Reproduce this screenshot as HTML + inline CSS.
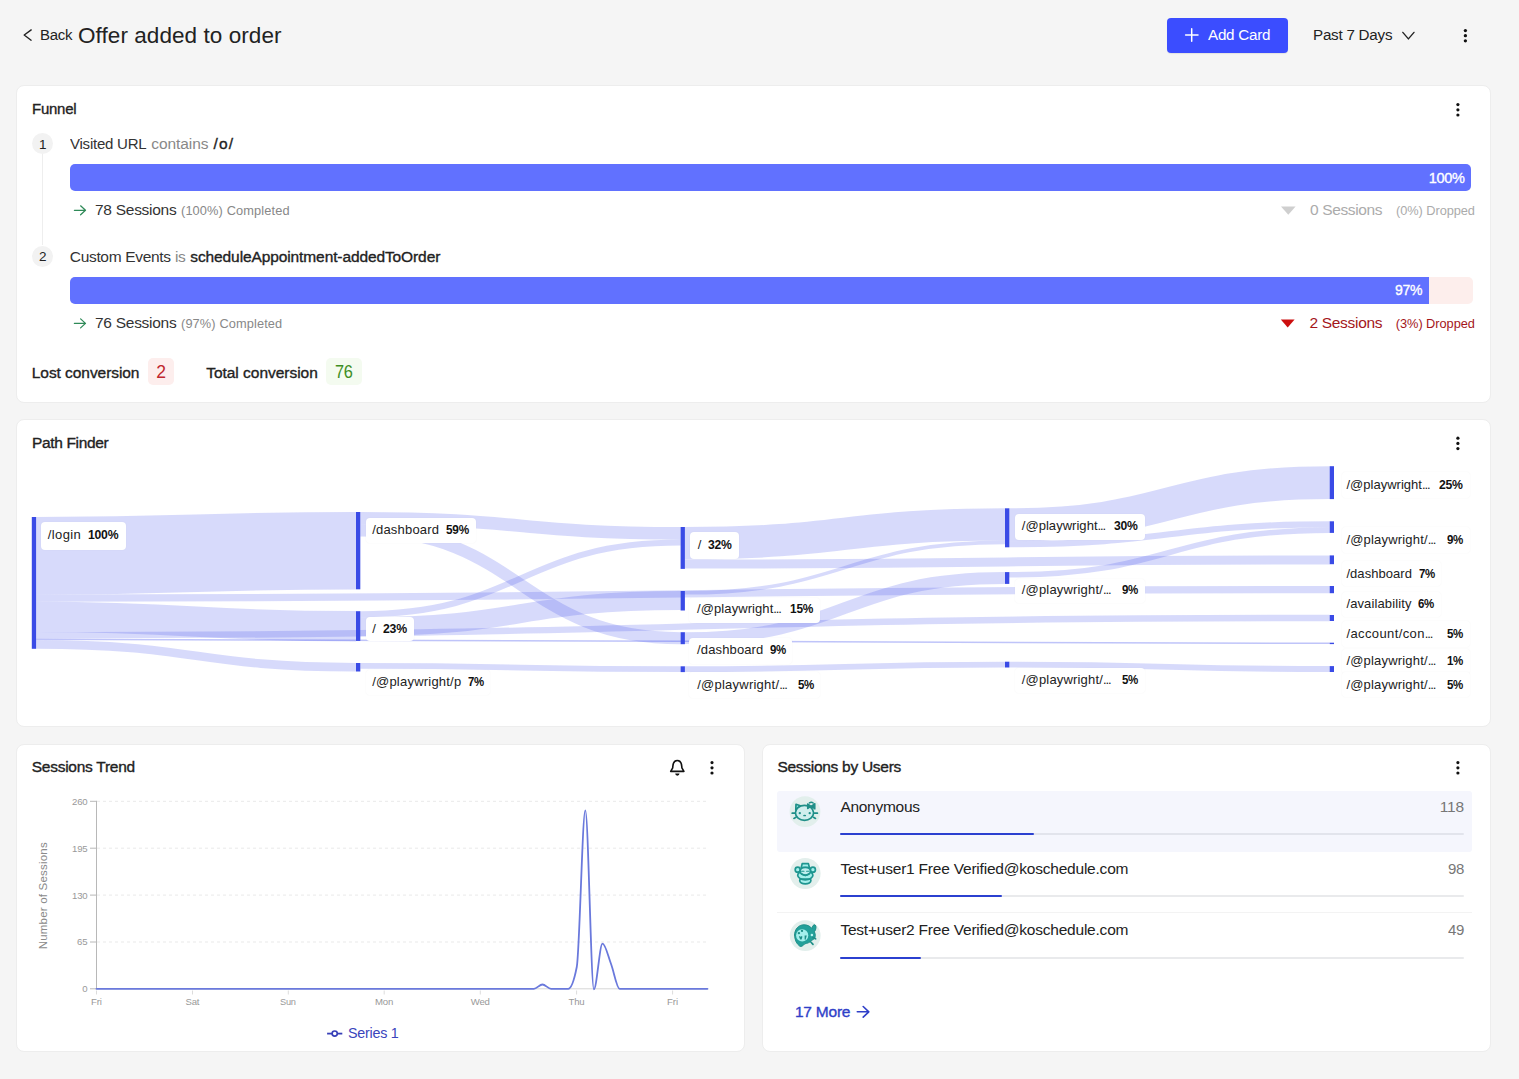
<!DOCTYPE html>
<html lang="en">
<head>
<meta charset="utf-8">
<title>Offer added to order</title>
<style>
*{box-sizing:border-box;margin:0;padding:0}
html,body{width:1519px;height:1079px;overflow:hidden;background:#f5f5f5}
body{font-family:"Liberation Sans",sans-serif;position:relative;color:#222}
.t{position:absolute;white-space:pre;line-height:1;z-index:4}
.card{position:absolute;background:#fff;border:1px solid #ededed;border-radius:8px;z-index:1}
.abs{position:absolute}
.lb{position:absolute;background:#fff;border-radius:4px;z-index:3;box-shadow:0 0 2px rgba(0,0,0,.045)}
.ico{position:absolute;left:0;top:0;z-index:6}
</style>
</head>
<body>

<!-- cards -->
<div class="card" style="left:15.5px;top:84.5px;width:1475px;height:318px"></div>
<div class="card" style="left:15.5px;top:418.5px;width:1475px;height:308px"></div>
<div class="card" style="left:15.5px;top:743.5px;width:729px;height:308px"></div>
<div class="card" style="left:761.5px;top:743.5px;width:729px;height:308px"></div>

<!-- add card button -->
<div class="abs" style="left:1167px;top:18.3px;width:121px;height:34.4px;background:#3b4dff;border-radius:4px;z-index:1;box-shadow:0 1px 1px rgba(0,0,0,.08)"></div>

<!-- funnel -->
<div class="abs" style="left:42.1px;top:154px;width:1.4px;height:91px;background:#eeeeee;z-index:2"></div>
<div class="abs" style="left:32.2px;top:133.1px;width:21.2px;height:21.2px;border-radius:50%;background:#f2f2f2;z-index:2"></div>
<div class="abs" style="left:32.2px;top:245.7px;width:21.2px;height:21.2px;border-radius:50%;background:#f2f2f2;z-index:2"></div>
<div class="abs" style="left:69.5px;top:164px;width:1401.8px;height:26.8px;border-radius:5px;background:#6171ff;z-index:2"></div>
<div class="abs" style="left:69.5px;top:276.8px;width:1403px;height:26.8px;border-radius:5px;background:#fdeeec;z-index:2;overflow:hidden"><div style="width:1359.3px;height:100%;background:#6171ff"></div></div>
<div class="abs" style="left:148px;top:358px;width:26.4px;height:27.4px;border-radius:5px;background:#fdeeed;z-index:2"></div>
<div class="abs" style="left:326.4px;top:358px;width:35.6px;height:27.4px;border-radius:5px;background:#f4fbf0;z-index:2"></div>

<!-- users rows -->
<div class="abs" style="left:776.5px;top:790.6px;width:695.8px;height:61.2px;background:#f5f6fd;border-radius:3px;z-index:2"></div>
<div class="abs" style="left:776.5px;top:912.2px;width:695.8px;height:1.2px;background:#f3f3f3;z-index:2"></div>
<div class="abs" style="left:840.3px;top:833.2px;width:623.8px;height:2.2px;background:#e2e4ec;z-index:3;border-radius:1px"></div>
<div class="abs" style="left:840.3px;top:833.2px;width:193.6px;height:2.2px;background:#2b40d0;z-index:3;border-radius:1px"></div>
<div class="abs" style="left:840.3px;top:895.2px;width:623.4px;height:2.2px;background:#e9eaec;z-index:3;border-radius:1px"></div>
<div class="abs" style="left:840.3px;top:895.2px;width:161.8px;height:2.2px;background:#2b40d0;z-index:3;border-radius:1px"></div>
<div class="abs" style="left:840.3px;top:957.1px;width:623.4px;height:2.2px;background:#e9eaec;z-index:3;border-radius:1px"></div>
<div class="abs" style="left:840.3px;top:957.1px;width:80.8px;height:2.2px;background:#2b40d0;z-index:3;border-radius:1px"></div>

<div class="lb" style="left:40.8px;top:522.2px;width:85.2px;height:27.5px"></div>
<div class="lb" style="left:365.8px;top:517.6px;width:110.2px;height:25.4px"></div>
<div class="lb" style="left:365.8px;top:616.8px;width:48.2px;height:24.7px"></div>
<div class="lb" style="left:365.8px;top:669.5px;width:124.2px;height:25.0px"></div>
<div class="lb" style="left:690px;top:532.2px;width:48.6px;height:26.6px"></div>
<div class="lb" style="left:688.7px;top:597.5px;width:131.8px;height:25.4px"></div>
<div class="lb" style="left:688.7px;top:638px;width:103.6px;height:26.0px"></div>
<div class="lb" style="left:688.7px;top:672px;width:131.8px;height:25.5px"></div>
<div class="lb" style="left:1014.9px;top:513.9px;width:129.8px;height:26.1px"></div>
<div class="lb" style="left:1014.9px;top:578.5px;width:129.8px;height:24.5px"></div>
<div class="lb" style="left:1014.9px;top:667.7px;width:129.8px;height:25.3px"></div>
<div class="lb" style="left:1342.4px;top:472px;width:127.6px;height:25.5px"></div>
<div class="lb" style="left:1342.4px;top:527.3px;width:127.6px;height:25.5px"></div>
<div class="lb" style="left:1342.4px;top:561px;width:99.1px;height:25.3px"></div>
<div class="lb" style="left:1342.4px;top:591.7px;width:99.1px;height:25.3px"></div>
<div class="lb" style="left:1342.4px;top:621.2px;width:127.6px;height:25.4px"></div>
<div class="lb" style="left:1342.4px;top:648.6px;width:127.6px;height:25.3px"></div>
<div class="lb" style="left:1342.4px;top:672.2px;width:127.6px;height:25.2px"></div>

<svg width="1519" height="1079" viewBox="0 0 1519 1079" style="position:absolute;left:0;top:0;z-index:2">
<g fill="none" stroke="#3946eb" stroke-opacity="0.2">
<path d="M36.1,555.70C196.1,555.70 196.1,550.70 356.0,550.70" stroke-width="77.4"/>
<path d="M36.1,598.05C682.9,598.05 682.9,589.65 1329.7,589.65" stroke-width="7.3"/>
<path d="M36.1,616.85C196.1,616.85 196.1,626.25 356.0,626.25" stroke-width="30.3"/>
<path d="M36.1,635.20C682.9,635.20 682.9,618.00 1329.7,618.00" stroke-width="6.4"/>
<path d="M36.1,639.35C682.9,639.35 682.9,643.35 1329.7,643.35" stroke-width="1.5" stroke-opacity="0.32"/>
<path d="M36.1,644.40C196.1,644.40 196.1,667.20 356.0,667.20" stroke-width="8.6"/>
<path d="M360.3,518.30C520.5,518.30 520.5,533.30 680.6,533.30" stroke-width="12.6"/>
<path d="M360.3,530.60C520.5,530.60 520.5,638.20 680.6,638.20" stroke-width="12.0"/>
<path d="M360.3,614.20C520.5,614.20 520.5,542.60 680.6,542.60" stroke-width="6.0"/>
<path d="M360.3,626.70C520.5,626.70 520.5,600.50 680.6,600.50" stroke-width="19.0"/>
<path d="M360.3,665.90C520.5,665.90 520.5,669.20 680.6,669.20" stroke-width="5.8"/>
<path d="M684.8,543.15C844.9,543.15 844.9,524.45 1005.0,524.45" stroke-width="32.3"/>
<path d="M684.8,564.00C1007.2,564.00 1007.2,559.90 1329.7,559.90" stroke-width="9.0"/>
<path d="M684.8,592.80C844.9,592.80 844.9,542.40 1005.0,542.40" stroke-width="3.6"/>
<path d="M684.8,638.10C844.9,638.10 844.9,578.00 1005.0,578.00" stroke-width="11.8"/>
<path d="M684.8,669.20C844.9,669.20 844.9,664.60 1005.0,664.60" stroke-width="5.8"/>
<path d="M1009.1,524.75C1169.4,524.75 1169.4,482.65 1329.7,482.65" stroke-width="32.9"/>
<path d="M1009.1,544.25C1169.4,544.25 1169.4,524.35 1329.7,524.35" stroke-width="6.1"/>
<path d="M1009.1,574.85C1169.4,574.85 1169.4,530.15 1329.7,530.15" stroke-width="5.5"/>
<path d="M1009.1,664.65C1169.4,664.65 1169.4,669.05 1329.7,669.05" stroke-width="5.9"/>
</g><g fill="#3a4be6">
<rect x="31.8" y="517" width="4.3" height="131.8"/>
<rect x="356.0" y="512" width="4.3" height="77.3"/>
<rect x="356.0" y="611.2" width="4.3" height="29.7"/>
<rect x="356.0" y="663" width="4.3" height="8.5"/>
<rect x="680.6" y="527" width="4.3" height="41.9"/>
<rect x="680.6" y="591" width="4.3" height="19.5"/>
<rect x="680.6" y="632.2" width="4.3" height="12.0"/>
<rect x="680.6" y="666.3" width="4.3" height="5.8"/>
<rect x="1005.0" y="508.3" width="4.3" height="39.0"/>
<rect x="1005.0" y="572.1" width="4.3" height="11.8"/>
<rect x="1005.0" y="661.7" width="4.3" height="5.8"/>
<rect x="1329.7" y="466.2" width="4.3" height="32.9"/>
<rect x="1329.7" y="521.3" width="4.3" height="11.6"/>
<rect x="1329.7" y="555.4" width="4.3" height="8.8"/>
<rect x="1329.7" y="586" width="4.3" height="7.2"/>
<rect x="1329.7" y="615" width="4.3" height="6.0"/>
<rect x="1329.7" y="642.7" width="4.3" height="1.4"/>
<rect x="1329.7" y="666.1" width="4.3" height="5.9"/>
</g></svg>

<svg class="ico" width="1519" height="1079" viewBox="0 0 1519 1079">
<!-- header -->
<polyline points="31.2,29.9 24.2,35 31.1,40.2" fill="none" stroke="#222" stroke-width="1.4" stroke-linecap="round" stroke-linejoin="round"/>
<path d="M1185.6,34.9H1198M1191.7,28.8V41.2" stroke="#fff" stroke-width="1.5" fill="none" stroke-linecap="round"/>
<polyline points="1402.8,32.4 1408.4,38.9 1414,32.4" fill="none" stroke="#222" stroke-width="1.4" stroke-linecap="round" stroke-linejoin="round"/>
<g fill="#111">
<circle cx="1465.4" cy="30.6" r="1.65"/><circle cx="1465.4" cy="35.7" r="1.65"/><circle cx="1465.4" cy="40.8" r="1.65"/>
<circle cx="1457.9" cy="104.6" r="1.6"/><circle cx="1457.9" cy="109.8" r="1.6"/><circle cx="1457.9" cy="115" r="1.6"/>
<circle cx="1457.9" cy="438.2" r="1.6"/><circle cx="1457.9" cy="443.4" r="1.6"/><circle cx="1457.9" cy="448.6" r="1.6"/>
<circle cx="712" cy="762.6" r="1.6"/><circle cx="712" cy="767.8" r="1.6"/><circle cx="712" cy="773" r="1.6"/>
<circle cx="1457.9" cy="762.6" r="1.6"/><circle cx="1457.9" cy="767.8" r="1.6"/><circle cx="1457.9" cy="773" r="1.6"/>
</g>
<!-- bell -->
<path d="M670.7,771.4 L672.7,767.9 C673,765.6 672.4,760.5 677.3,760.5 C682.2,760.5 681.6,765.6 681.9,767.9 L683.9,771.4 Z" fill="none" stroke="#111" stroke-width="1.6" stroke-linejoin="round"/>
<path d="M675.2,773.5 A2.15,2.15 0 0 0 679.5,773.5 Z" fill="#111"/>
<!-- funnel arrows / triangles -->
<g fill="none" stroke="#2f8a58" stroke-width="1.25" stroke-linecap="round" stroke-linejoin="round">
<path d="M74.4,210.3H85.4M80.6,205.8L85.5,210.3L80.6,214.8"/>
<path d="M74.4,323.4H85.4M80.6,318.9L85.5,323.4L80.6,327.9"/>
</g>
<path d="M1281,206.4H1295.6L1288.3,214.8Z" fill="#cfcfcf"/>
<path d="M1280.8,319.4H1294.6L1287.7,327.6Z" fill="#cc0e0e"/>
<!-- 17 more arrow -->
<path d="M857.3,1011.8H868.6M863.2,1006.5L868.8,1011.8L863.2,1017.1" fill="none" stroke="#2f3fc8" stroke-width="1.6" stroke-linecap="round" stroke-linejoin="round"/>
<g stroke="#e9e9e9" stroke-width="1" stroke-dasharray="3 3" fill="none">
<path d="M97,801.3H707.5"/>
<path d="M97,848.2H707.5"/>
<path d="M97,895.1H707.5"/>
<path d="M97,942.0H707.5"/>
</g>
<g stroke="#b8b8b8" stroke-width="1" fill="none">
<path d="M96.5,800.8V988.8"/>
<path d="M90,801.3H96.5"/>
<path d="M90,848.2H96.5"/>
<path d="M90,895.1H96.5"/>
<path d="M90,942.0H96.5"/>
<path d="M90,988.8H96.5"/>
</g>
<path d="M96.5,988.8H707.5" stroke="#d6d6d6" stroke-width="1" fill="none"/>
<g stroke="#dcdcdc" stroke-width="1" fill="none">
<path d="M96.5,990.5V994.5"/>
<path d="M192.5,990.5V994.5"/>
<path d="M288.3,990.5V994.5"/>
<path d="M384.2,990.5V994.5"/>
<path d="M480.3,990.5V994.5"/>
<path d="M576.6,990.5V994.5"/>
<path d="M672.6,990.5V994.5"/>
</g>
<path d="M96.50,988.80L533.88,988.80C536.73,988.80 539.59,984.50 542.45,984.50C545.31,984.50 548.17,988.80 551.03,988.80L568.18,988.80C571.04,988.80 573.90,981.53 576.76,967.00C579.61,952.47 582.47,810.40 585.33,810.40C588.19,810.40 591.05,989.30 593.91,989.30C596.77,989.30 599.63,943.70 602.48,943.70C605.34,943.70 608.20,956.48 611.06,964.00C613.92,971.52 616.78,988.80 619.64,988.80L707.50,988.80" fill="none" stroke="#6a79dc" stroke-width="1.8" stroke-linejoin="round" stroke-linecap="round"/>
<path d="M327.1,1033.6H342.3" stroke="#3840b8" stroke-width="1.8" fill="none"/>
<circle cx="334.7" cy="1033.6" r="2.6" fill="#fff" stroke="#3840b8" stroke-width="1.7"/>
<!-- avatar 1: cat with bow -->
<circle cx="805" cy="811.7" r="15.4" fill="#e2efec"/>
<g stroke="#1f8f88" stroke-width="1.7" stroke-linecap="round" stroke-linejoin="round" fill="#cfeeed">
<path d="M795.8,810 L796,804.3 L800.4,805.8 Z" fill="#9eeae6"/>
<ellipse cx="804.5" cy="812.8" rx="9.1" ry="7.5"/>
<path d="M807.6,803.9 V808.6 L811.1,806.3 Z M814.9,803.6 V809 L811.1,806.3 Z" fill="#1f8f88" stroke-width="1.3"/>
<path d="M809.4,802.9 C810.4,802.2 812.2,802.2 813.2,803" fill="none" stroke-width="1.5"/>
<path d="M792.2,813.2H794.4M793.9,818.4L796,817.3M814.7,813.2H817.4M813.5,817.3L815.5,818.4" fill="none" stroke-width="1.7"/>
</g>
<g fill="#1f8f88"><circle cx="799.8" cy="813.2" r="1.15"/><circle cx="809.7" cy="813.2" r="1.15"/><ellipse cx="804.6" cy="815.5" rx="1.5" ry=".85"/></g>
<!-- avatar 2: monkey with hat -->
<circle cx="805.2" cy="873.5" r="15.4" fill="#e3efec"/>
<g stroke="#1f9690" stroke-width="1.7" stroke-linecap="round" stroke-linejoin="round" fill="#a6f0ec">
<circle cx="797.7" cy="869.7" r="2.5"/><circle cx="812.9" cy="869.7" r="2.5"/>
<path d="M802.2,863.6H808.4L809.4,867.6H801.2Z"/>
<ellipse cx="805.3" cy="880.6" rx="5.6" ry="3.3"/>
<ellipse cx="805.3" cy="875.2" rx="7.6" ry="4.6"/>
<ellipse cx="805.3" cy="871.2" rx="5.2" ry="3.9" fill="#bfeeee"/>
<path d="M801.4,873.6L805.3,875.6L809.2,873.6" fill="none" stroke-width="1.6"/>
<path d="M801.6,871.2H804M806.6,871.2H809" fill="none" stroke-width="1.1"/>
<path d="M801,878.8H809.6" fill="none" stroke-width="1.3"/>
</g>
<!-- avatar 3: hamster -->
<circle cx="805.2" cy="935.6" r="15.4" fill="#e2efec"/>
<g stroke-linecap="round" stroke-linejoin="round">
<path d="M794.6,935 C794.6,929 798.8,924.8 804,924.8 C807.6,924.8 810.4,926.4 812,928.6 C812.2,926 813.6,924.4 815,924.9 C816.6,925.6 816.2,929.6 814.4,931.8 C815.4,933.8 815.6,936.4 814.6,938.4 L811.2,940.8 C809.6,942.6 807.2,943.4 804.8,943.8 C803.2,945.8 801,947 799.8,946.2 C796.4,943.8 794.6,939.6 794.6,935Z" fill="#22a09a" stroke="#1f8f88" stroke-width="1"/>
<circle cx="802.2" cy="935.4" r="6.1" fill="#a4f0ec"/>
<circle cx="811.9" cy="934.9" r="1.25" fill="#b9f5f2"/>
<path d="M812.8,937.6L815.6,938.8M810.8,942L813,944.4" stroke="#1f8f88" stroke-width="1.7" fill="none"/>
<g fill="#1f8f88"><circle cx="802" cy="930.9" r="1.15"/><circle cx="798.9" cy="933.1" r="1.2"/><path d="M798.9,936.6C799.6,936 800.3,936.2 800.7,936.8C801.2,936.2 802,936.2 802.4,936.8L801.6,939.4L800.2,939.6Z"/><path d="M804.6,935.4L806.8,935.6L805.6,939.8L804.6,939.4Z"/></g>
</g>

</svg>


<span class="t" style="left:39.50px;top:27px;font-size:15.5px;color:#222;letter-spacing:-0.250px;transform:scaleX(0.9668);transform-origin:0 50%;">Back</span>
<span class="t" style="left:78.00px;top:25px;font-size:22.5px;color:#222;letter-spacing:0.067px;">Offer added to order</span>
<span class="t" style="left:1208.00px;top:27px;font-size:15.5px;color:#fff;letter-spacing:-0.250px;transform:scaleX(0.9806);transform-origin:0 50%;">Add Card</span>
<span class="t" style="left:1313.00px;top:27px;font-size:15.5px;color:#222;letter-spacing:-0.250px;transform:scaleX(0.9807);transform-origin:0 50%;">Past 7 Days</span>
<span class="t" style="left:32.00px;top:101px;font-size:15.5px;color:#222;letter-spacing:-0.250px;-webkit-text-stroke:0.35px currentColor;transform:scaleX(0.9663);transform-origin:0 50%;">Funnel</span>
<span class="t" style="left:39.04px;top:138px;font-size:13.5px;color:#222;letter-spacing:0.000px;">1</span>
<span class="t" style="left:69.80px;top:136px;font-size:15.5px;color:#333;letter-spacing:-0.250px;transform:scaleX(0.9701);transform-origin:0 50%;">Visited URL</span>
<span class="t" style="left:151.30px;top:136px;font-size:15.5px;color:#888;letter-spacing:-0.076px;">contains</span>
<span class="t" style="left:213.50px;top:136px;font-size:15.5px;color:#222;letter-spacing:1.133px;-webkit-text-stroke:0.35px currentColor;">/o/</span>
<span class="t" style="left:1428.80px;top:171px;font-size:14.5px;color:#fff;letter-spacing:-0.298px;-webkit-text-stroke:0.35px currentColor;">100%</span>
<span class="t" style="left:95.00px;top:202px;font-size:15.5px;color:#333;letter-spacing:-0.275px;">78 Sessions</span>
<span class="t" style="left:181.00px;top:205px;font-size:12.8px;color:#888;letter-spacing:0.120px;">(100%) Completed</span>
<span class="t" style="left:1310.00px;top:202px;font-size:15.5px;color:#ababab;letter-spacing:-0.370px;">0 Sessions</span>
<span class="t" style="left:1396.00px;top:205px;font-size:12.8px;color:#ababab;letter-spacing:-0.061px;">(0%) Dropped</span>
<span class="t" style="left:39.04px;top:250px;font-size:13.5px;color:#222;letter-spacing:0.000px;">2</span>
<span class="t" style="left:69.80px;top:249px;font-size:15.5px;color:#333;letter-spacing:-0.326px;">Custom Events</span>
<span class="t" style="left:175.20px;top:249px;font-size:15.5px;color:#888;letter-spacing:-0.400px;transform:scaleX(0.9997);transform-origin:0 50%;">is</span>
<span class="t" style="left:190.30px;top:249px;font-size:15.5px;color:#222;letter-spacing:-0.107px;-webkit-text-stroke:0.35px currentColor;">scheduleAppointment-addedToOrder</span>
<span class="t" style="left:1394.60px;top:283px;font-size:14.5px;color:#fff;letter-spacing:-0.250px;-webkit-text-stroke:0.35px currentColor;transform:scaleX(0.9674);transform-origin:0 50%;">97%</span>
<span class="t" style="left:95.00px;top:315px;font-size:15.5px;color:#333;letter-spacing:-0.275px;">76 Sessions</span>
<span class="t" style="left:181.00px;top:318px;font-size:12.8px;color:#888;letter-spacing:0.116px;">(97%) Completed</span>
<span class="t" style="left:1309.40px;top:315px;font-size:15.5px;color:#a4161a;letter-spacing:-0.292px;">2 Sessions</span>
<span class="t" style="left:1395.80px;top:318px;font-size:12.8px;color:#a4161a;letter-spacing:-0.052px;">(3%) Dropped</span>
<span class="t" style="left:31.80px;top:365px;font-size:15.5px;color:#222;letter-spacing:-0.062px;-webkit-text-stroke:0.35px currentColor;">Lost conversion</span>
<span class="t" style="left:156.18px;top:364px;font-size:17.5px;color:#c0272d;letter-spacing:0.000px;">2</span>
<span class="t" style="left:206.20px;top:365px;font-size:15.5px;color:#222;letter-spacing:-0.028px;-webkit-text-stroke:0.35px currentColor;">Total conversion</span>
<span class="t" style="left:334.80px;top:364px;font-size:17.5px;color:#3e8e24;letter-spacing:-0.400px;transform:scaleX(0.9335);transform-origin:0 50%;">76</span>
<span class="t" style="left:32.00px;top:435px;font-size:15.5px;color:#222;letter-spacing:-0.344px;-webkit-text-stroke:0.35px currentColor;">Path Finder</span>
<span class="t" style="left:31.80px;top:759px;font-size:15.5px;color:#222;letter-spacing:-0.265px;-webkit-text-stroke:0.35px currentColor;">Sessions Trend</span>
<span class="t" style="left:777.40px;top:759px;font-size:15.5px;color:#222;letter-spacing:-0.279px;-webkit-text-stroke:0.35px currentColor;">Sessions by Users</span>
<span class="t" style="left:840.40px;top:799px;font-size:15.5px;color:#222;letter-spacing:-0.282px;">Anonymous</span>
<span class="t" style="left:1439.80px;top:799px;font-size:15.5px;color:#777;letter-spacing:-0.209px;">118</span>
<span class="t" style="left:840.40px;top:861px;font-size:15.5px;color:#222;letter-spacing:-0.213px;">Test+user1 Free Verified@koschedule.com</span>
<span class="t" style="left:1447.80px;top:861px;font-size:15.5px;color:#777;letter-spacing:-0.400px;transform:scaleX(0.9674);transform-origin:0 50%;">98</span>
<span class="t" style="left:840.40px;top:922px;font-size:15.5px;color:#222;letter-spacing:-0.213px;">Test+user2 Free Verified@koschedule.com</span>
<span class="t" style="left:1447.80px;top:922px;font-size:15.5px;color:#777;letter-spacing:-0.400px;transform:scaleX(0.9674);transform-origin:0 50%;">49</span>
<span class="t" style="left:794.90px;top:1004px;font-size:15.5px;color:#2f3fc8;letter-spacing:-0.212px;-webkit-text-stroke:0.35px currentColor;">17 More</span>
<span class="t" style="left:72.00px;top:797px;font-size:9.6px;color:#999;letter-spacing:-0.208px;">260</span>
<span class="t" style="left:72.00px;top:844px;font-size:9.6px;color:#999;letter-spacing:-0.208px;">195</span>
<span class="t" style="left:72.00px;top:891px;font-size:9.6px;color:#999;letter-spacing:-0.208px;">130</span>
<span class="t" style="left:77.00px;top:937px;font-size:9.6px;color:#999;letter-spacing:-0.072px;">65</span>
<span class="t" style="left:82.33px;top:984px;font-size:9.6px;color:#999;letter-spacing:0.000px;">0</span>
<span class="t" style="left:91.00px;top:997px;font-size:9.6px;color:#999;letter-spacing:-0.094px;">Fri</span>
<span class="t" style="left:185.50px;top:997px;font-size:9.6px;color:#999;letter-spacing:-0.203px;">Sat</span>
<span class="t" style="left:280.30px;top:997px;font-size:9.6px;color:#999;letter-spacing:-0.250px;transform:scaleX(0.9651);transform-origin:0 50%;">Sun</span>
<span class="t" style="left:374.95px;top:997px;font-size:9.6px;color:#999;letter-spacing:-0.086px;">Mon</span>
<span class="t" style="left:470.80px;top:997px;font-size:9.6px;color:#999;letter-spacing:-0.281px;">Wed</span>
<span class="t" style="left:568.60px;top:997px;font-size:9.6px;color:#999;letter-spacing:-0.273px;">Thu</span>
<span class="t" style="left:667.10px;top:997px;font-size:9.6px;color:#999;letter-spacing:-0.094px;">Fri</span>
<span class="t" style="left:347.60px;top:1026px;font-size:14.7px;color:#3a44bc;letter-spacing:-0.250px;transform:scaleX(0.9743);transform-origin:0 50%;">Series 1</span>
<span class="t" style="left:47.80px;top:528px;font-size:13px;color:#222;letter-spacing:0.384px;z-index:5;">/login</span>
<span class="t" style="left:87.70px;top:528px;font-size:13px;color:#111;letter-spacing:-0.250px;font-weight:700;transform:scaleX(0.9385);transform-origin:0 50%;z-index:5;">100%</span>
<span class="t" style="left:372.20px;top:523px;font-size:13px;color:#222;letter-spacing:0.193px;z-index:5;">/dashboard</span>
<span class="t" style="left:445.50px;top:523px;font-size:13px;color:#111;letter-spacing:-0.250px;font-weight:700;transform:scaleX(0.9048);transform-origin:0 50%;z-index:5;">59%</span>
<span class="t" style="left:372.29px;top:622px;font-size:13px;color:#222;letter-spacing:0.000px;z-index:5;">/</span>
<span class="t" style="left:383.40px;top:622px;font-size:13px;color:#111;letter-spacing:-0.250px;font-weight:700;transform:scaleX(0.9439);transform-origin:0 50%;z-index:5;">23%</span>
<span class="t" style="left:372.20px;top:675px;font-size:13px;color:#222;letter-spacing:0.216px;z-index:5;">/@playwright/p</span>
<span class="t" style="left:467.70px;top:675px;font-size:13px;color:#111;letter-spacing:-0.400px;font-weight:700;transform:scaleX(0.8751);transform-origin:0 50%;z-index:5;">7%</span>
<span class="t" style="left:697.64px;top:538px;font-size:13px;color:#222;letter-spacing:0.000px;z-index:5;">/</span>
<span class="t" style="left:708.00px;top:538px;font-size:13px;color:#111;letter-spacing:-0.250px;font-weight:700;transform:scaleX(0.9361);transform-origin:0 50%;z-index:5;">32%</span>
<span class="t" style="left:697.10px;top:602px;font-size:13px;color:#222;letter-spacing:0.077px;z-index:5;">/@playwright<span style="letter-spacing:-1.15px;margin-right:1.15px">...</span></span>
<span class="t" style="left:790.20px;top:602px;font-size:13px;color:#111;letter-spacing:-0.250px;font-weight:700;transform:scaleX(0.9165);transform-origin:0 50%;z-index:5;">15%</span>
<span class="t" style="left:697.10px;top:643px;font-size:13px;color:#222;letter-spacing:0.126px;z-index:5;">/dashboard</span>
<span class="t" style="left:769.80px;top:643px;font-size:13px;color:#111;letter-spacing:-0.400px;font-weight:700;transform:scaleX(0.8806);transform-origin:0 50%;z-index:5;">9%</span>
<span class="t" style="left:697.20px;top:678px;font-size:13px;color:#222;letter-spacing:0.240px;z-index:5;">/@playwright/<span style="letter-spacing:-1.15px;margin-right:1.15px">...</span></span>
<span class="t" style="left:797.50px;top:678px;font-size:13px;color:#111;letter-spacing:-0.400px;font-weight:700;transform:scaleX(0.8860);transform-origin:0 50%;z-index:5;">5%</span>
<span class="t" style="left:1021.80px;top:519px;font-size:13px;color:#222;letter-spacing:0.035px;z-index:5;">/@playwright<span style="letter-spacing:-1.15px;margin-right:1.15px">...</span></span>
<span class="t" style="left:1114.40px;top:519px;font-size:13px;color:#111;letter-spacing:-0.250px;font-weight:700;transform:scaleX(0.9361);transform-origin:0 50%;z-index:5;">30%</span>
<span class="t" style="left:1021.80px;top:583px;font-size:13px;color:#222;letter-spacing:0.170px;z-index:5;">/@playwright/<span style="letter-spacing:-1.15px;margin-right:1.15px">...</span></span>
<span class="t" style="left:1122.00px;top:583px;font-size:13px;color:#111;letter-spacing:-0.400px;font-weight:700;transform:scaleX(0.8860);transform-origin:0 50%;z-index:5;">9%</span>
<span class="t" style="left:1021.80px;top:673px;font-size:13px;color:#222;letter-spacing:0.170px;z-index:5;">/@playwright/<span style="letter-spacing:-1.15px;margin-right:1.15px">...</span></span>
<span class="t" style="left:1122.00px;top:673px;font-size:13px;color:#111;letter-spacing:-0.400px;font-weight:700;transform:scaleX(0.8860);transform-origin:0 50%;z-index:5;">5%</span>
<span class="t" style="left:1346.40px;top:478px;font-size:13px;color:#222;letter-spacing:0.019px;z-index:5;">/@playwright<span style="letter-spacing:-1.15px;margin-right:1.15px">...</span></span>
<span class="t" style="left:1439.00px;top:478px;font-size:13px;color:#111;letter-spacing:-0.250px;font-weight:700;transform:scaleX(0.9400);transform-origin:0 50%;z-index:5;">25%</span>
<span class="t" style="left:1346.40px;top:533px;font-size:13px;color:#222;letter-spacing:0.186px;z-index:5;">/@playwright/<span style="letter-spacing:-1.15px;margin-right:1.15px">...</span></span>
<span class="t" style="left:1446.70px;top:533px;font-size:13px;color:#111;letter-spacing:-0.400px;font-weight:700;transform:scaleX(0.8860);transform-origin:0 50%;z-index:5;">9%</span>
<span class="t" style="left:1346.40px;top:567px;font-size:13px;color:#222;letter-spacing:0.060px;z-index:5;">/dashboard</span>
<span class="t" style="left:1418.90px;top:567px;font-size:13px;color:#111;letter-spacing:-0.400px;font-weight:700;transform:scaleX(0.8806);transform-origin:0 50%;z-index:5;">7%</span>
<span class="t" style="left:1346.40px;top:597px;font-size:13px;color:#222;letter-spacing:0.126px;z-index:5;">/availability</span>
<span class="t" style="left:1418.00px;top:597px;font-size:13px;color:#111;letter-spacing:-0.400px;font-weight:700;transform:scaleX(0.8806);transform-origin:0 50%;z-index:5;">6%</span>
<span class="t" style="left:1346.40px;top:627px;font-size:13px;color:#222;letter-spacing:0.387px;z-index:5;">/account/con<span style="letter-spacing:-1.15px;margin-right:1.15px">...</span></span>
<span class="t" style="left:1446.70px;top:627px;font-size:13px;color:#111;letter-spacing:-0.400px;font-weight:700;transform:scaleX(0.8860);transform-origin:0 50%;z-index:5;">5%</span>
<span class="t" style="left:1346.40px;top:654px;font-size:13px;color:#222;letter-spacing:0.186px;z-index:5;">/@playwright/<span style="letter-spacing:-1.15px;margin-right:1.15px">...</span></span>
<span class="t" style="left:1446.70px;top:654px;font-size:13px;color:#111;letter-spacing:-0.400px;font-weight:700;transform:scaleX(0.8860);transform-origin:0 50%;z-index:5;">1%</span>
<span class="t" style="left:1346.40px;top:678px;font-size:13px;color:#222;letter-spacing:0.186px;z-index:5;">/@playwright/<span style="letter-spacing:-1.15px;margin-right:1.15px">...</span></span>
<span class="t" style="left:1446.70px;top:678px;font-size:13px;color:#111;letter-spacing:-0.400px;font-weight:700;transform:scaleX(0.8860);transform-origin:0 50%;z-index:5;">5%</span>
<span class="t" style="left:-10.50px;top:890px;font-size:11.5px;color:#8a8a8a;letter-spacing:0.203px;transform:rotate(-90deg);transform-origin:50% 50%;">Number of Sessions</span>

</body>
</html>
